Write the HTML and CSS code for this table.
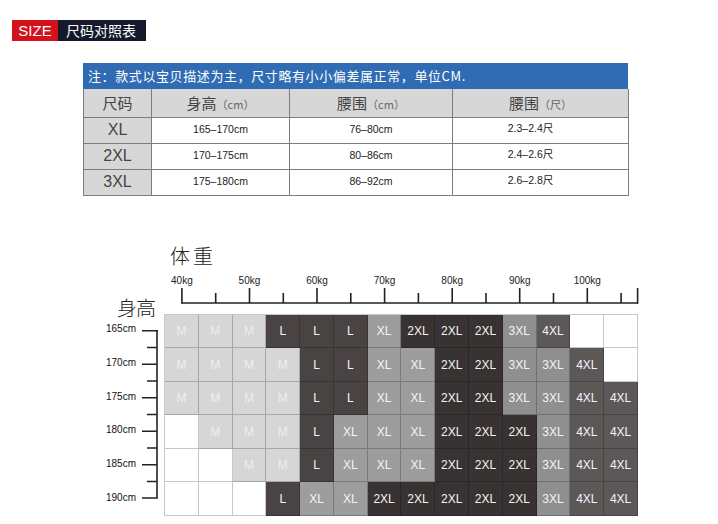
FILE: index.html
```html
<!DOCTYPE html>
<html lang="zh">
<head>
<meta charset="utf-8">
<title>尺码对照表</title>
<link rel="stylesheet" href="styles.css">
</head>
<body>
<div class="page">
  <div class="title-bar">
    <span class="tag-size">SIZE</span>
    <span class="tag-name">尺码对照表</span>
  </div>

  <div class="size-table">
    <div class="note">注：款式以宝贝描述为主，尺寸略有小小偏差属正常，单位CM.</div>
    <table class="sizes">
      <colgroup>
        <col class="w1"><col class="w2"><col class="w3"><col class="w4">
      </colgroup>
      <tr class="head">
        <th>尺码</th>
        <th>身高<small>（cm）</small></th>
        <th>腰围<small>（cm）</small></th>
        <th>腰围<small>（尺）</small></th>
      </tr>
      <tr>
        <td class="size">XL</td><td class="val">165–170cm</td><td class="val">76–80cm</td><td class="val chi">2.3–2.4尺</td>
      </tr>
      <tr>
        <td class="size">2XL</td><td class="val">170–175cm</td><td class="val">80–86cm</td><td class="val chi">2.4–2.6尺</td>
      </tr>
      <tr>
        <td class="size">3XL</td><td class="val">175–180cm</td><td class="val">86–92cm</td><td class="val chi">2.6–2.8尺</td>
      </tr>
    </table>
  </div>

  <div class="chart">
    <div class="blank"></div>
    <div class="weight-title">体重</div>

    <div class="height-title">身高</div>
    <div class="weight-axis">
      <div class="kg-row">
        <span class="kg">40kg</span><span class="kg">50kg</span><span class="kg">60kg</span><span class="kg">70kg</span><span class="kg">80kg</span><span class="kg">90kg</span><span class="kg">100kg</span>
      </div>
      <svg class="top-ticks" width="476" height="18" viewBox="0 0 476 18">
        <g stroke="#222" stroke-width="1.6" fill="none">
          <path d="M17.9 16 H474"/>
          <path d="M17.9 1 V16.8 M85.5 1 V16 M153 1 V16 M220.6 1 V16 M288.2 1 V16 M355.7 1 V16 M423.3 1 V16 M473.6 1 V16.8"/>
          <path d="M51.7 6 V16 M119.3 6 V16 M186.8 6 V16 M254.4 6 V16 M322 6 V16 M389.5 6 V16 M457.1 6 V16"/>
        </g>
      </svg>
    </div>

    <div class="height-axis">
      <div class="cm-col">
        <span>165cm</span><span>170cm</span><span>175cm</span><span>180cm</span><span>185cm</span><span>190cm</span>
      </div>
      <svg class="left-ticks" width="20" height="202" viewBox="0 0 20 202">
        <g stroke="#222" stroke-width="1.6" fill="none">
          <path d="M17 16 V184"/>
          <path d="M2 16.75 H17.8 M2 50.25 H17 M2 83.75 H17 M2 117.25 H17 M2 150.75 H17 M2 184 H17.8"/>
          <path d="M7 33.5 H17 M7 67 H17 M7 100.5 H17 M7 134 H17 M7 167.5 H17"/>
        </g>
      </svg>
    </div>

    <div class="cells">
      <div class="c m">M</div><div class="c m">M</div><div class="c m">M</div><div class="c l">L</div><div class="c l">L</div><div class="c l">L</div><div class="c xl">XL</div><div class="c x2">2XL</div><div class="c x2">2XL</div><div class="c x2">2XL</div><div class="c x3">3XL</div><div class="c x4">4XL</div><div class="c w"></div><div class="c w"></div>

      <div class="c m">M</div><div class="c m">M</div><div class="c m">M</div><div class="c m">M</div><div class="c l">L</div><div class="c l">L</div><div class="c xl">XL</div><div class="c xl">XL</div><div class="c x2">2XL</div><div class="c x2">2XL</div><div class="c x3">3XL</div><div class="c x3">3XL</div><div class="c x4">4XL</div><div class="c w"></div>

      <div class="c m">M</div><div class="c m">M</div><div class="c m">M</div><div class="c m">M</div><div class="c l">L</div><div class="c l">L</div><div class="c xl">XL</div><div class="c xl">XL</div><div class="c x2">2XL</div><div class="c x2">2XL</div><div class="c x3">3XL</div><div class="c x3">3XL</div><div class="c x4">4XL</div><div class="c x4">4XL</div>

      <div class="c w"></div><div class="c m">M</div><div class="c m">M</div><div class="c m">M</div><div class="c l">L</div><div class="c xl">XL</div><div class="c xl">XL</div><div class="c xl">XL</div><div class="c x2">2XL</div><div class="c x2">2XL</div><div class="c x2">2XL</div><div class="c x3">3XL</div><div class="c x4">4XL</div><div class="c x4">4XL</div>

      <div class="c w"></div><div class="c w"></div><div class="c m">M</div><div class="c m">M</div><div class="c l">L</div><div class="c xl">XL</div><div class="c xl">XL</div><div class="c xl">XL</div><div class="c x2">2XL</div><div class="c x2">2XL</div><div class="c x2">2XL</div><div class="c x3">3XL</div><div class="c x4">4XL</div><div class="c x4">4XL</div>

      <div class="c w"></div><div class="c w"></div><div class="c w"></div><div class="c l">L</div><div class="c xl">XL</div><div class="c xl">XL</div><div class="c x2">2XL</div><div class="c x2">2XL</div><div class="c x2">2XL</div><div class="c x2">2XL</div><div class="c x2">2XL</div><div class="c x3">3XL</div><div class="c x4">4XL</div><div class="c x4">4XL</div>
    </div>
  </div>
</div>
</body>
</html>
```

FILE: styles.css
```css
* { box-sizing: border-box; }

body {
  margin: 0;
  background: #fff;
  font-family: "Liberation Sans", "Noto Sans CJK SC", sans-serif;
  color: #222;
}

.page {
  width: 718px;
}

/* Title bar */
.title-bar {
  display: flex;
  height: 21px;
  margin: 20px 0 0 12px;
}

.tag-size {
  width: 46px;
  background: #d3121c;
  color: #fff;
  font-size: 15px;
  line-height: 21px;
  text-align: center;
}

.tag-name {
  width: 88px;
  background: #141a2b;
  color: #fff;
  font-family: "Noto Sans CJK SC", sans-serif;
  font-size: 14px;
  line-height: 21px;
  padding-left: 8px;
}

/* Size table */
.size-table {
  width: 545px;
  margin: 22px 0 0 83px;
}

.note {
  height: 26px;
  background: #2f6cb3;
  color: #fff;
  font-family: "Noto Sans CJK SC", sans-serif;
  font-size: 13px;
  line-height: 26px;
  letter-spacing: 0.6px;
  padding-left: 5px;
}

.sizes {
  width: 545px;
  border-collapse: collapse;
  table-layout: fixed;
}

.w1 { width: 68px; }
.w2 { width: 138px; }
.w3 { width: 163px; }
.w4 { width: 176px; }

.sizes th,
.sizes td {
  border: 1px solid #7d7d7d;
  padding: 0;
}

.sizes .head th {
  border-top: none;
  height: 28px;
  background: #d7d7d7;
  color: #444;
  font-family: "Noto Sans CJK SC", sans-serif;
  font-size: 15px;
  font-weight: normal;
  text-align: center;
}

.sizes .head small {
  font-size: 11px;
  color: #666;
}

.sizes td {
  height: 26px;
}

.sizes td.size {
  background: #d7d7d7;
  color: #444;
  font-size: 16px;
  text-align: center;
}

.sizes td.val {
  font-size: 10.5px;
  color: #222;
  text-align: center;
  padding-bottom: 3px;
}

.sizes td.chi {
  padding-right: 20px;
  padding-bottom: 6px;
}

/* Chart */
.chart {
  display: grid;
  grid-template-columns: 164px 474px;
  margin-top: 50px;
}

.weight-title {
  font-family: "Noto Sans CJK SC", sans-serif;
  font-weight: 300;
  font-size: 20px;
  line-height: 20px;
  letter-spacing: 3px;
  color: #222;
  padding-left: 6px;
}

.height-title {
  align-self: end;
  margin-bottom: -4px;
  text-align: right;
  padding-right: 9px;
  font-family: "Noto Sans CJK SC", sans-serif;
  font-weight: 300;
  font-size: 20px;
  line-height: 20px;
  letter-spacing: -1px;
  color: #222;
}

.weight-axis {
  padding-top: 9px;
  padding-bottom: 9px;
}

.kg-row {
  display: grid;
  grid-template-columns: repeat(7, 1fr);
  padding-left: 1px;
  height: 12px;
}

.kg {
  width: 50%;
  text-align: center;
  white-space: nowrap;
  font-size: 10px;
  line-height: 12px;
  color: #222;
}

.top-ticks {
  display: block;
}

.height-axis {
  display: flex;
  gap: 4px;
}

.cm-col {
  width: 136px;
  height: 202px;
  display: grid;
  grid-template-rows: repeat(6, 1fr);
  text-align: right;
}

.cm-col span {
  align-self: center;
  font-size: 10px;
  line-height: 12px;
  color: #111;
  margin-top: -2px;
}

.left-ticks {
  display: block;
}

.cells {
  display: grid;
  grid-template-columns: repeat(14, 1fr);
  grid-template-rows: repeat(6, 1fr);
  width: 474px;
  height: 202px;
  border-top: 1px solid rgba(0, 0, 0, 0.22);
  border-left: 1px solid rgba(0, 0, 0, 0.22);
}

.c {
  display: flex;
  align-items: center;
  justify-content: center;
  border-right: 1px solid rgba(0, 0, 0, 0.22);
  border-bottom: 1px solid rgba(0, 0, 0, 0.22);
  font-size: 12px;
  color: #f4f4f4;
  padding-top: 1px;
}

.c.m  { background: #d6d6d6; color: #eeeeee; }
.c.l  { background: #494343; }
.c.xl { background: #9d9d9d; }
.c.x2 { background: #383232; }
.c.x3 { background: #8f8f8f; }
.c.x4 { background: #5d5858; }
.c.w  { background: #ffffff; }
```
